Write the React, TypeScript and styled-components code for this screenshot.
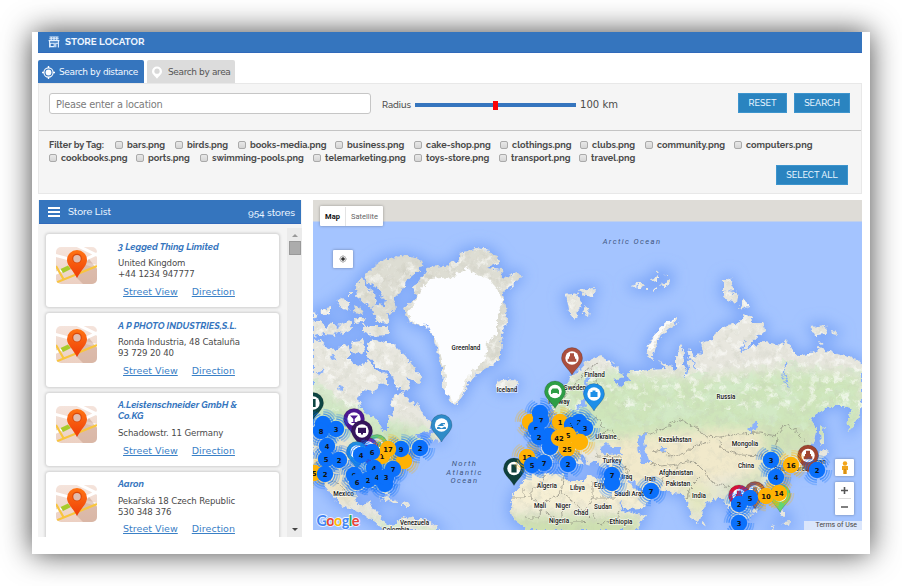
import React from "react";
import styled, { createGlobalStyle, css } from "styled-components";

const VERDANA = `"DejaVu Sans", Verdana, sans-serif`;
const RALEWAY = `Raleway, Lato, sans-serif`;
const BLUE = "#3575be";

const Global = createGlobalStyle`
  * { box-sizing: border-box; }
  html, body { margin: 0; background: #fff; }
  body { width: 902px; height: 586px; overflow: hidden; font-family: ${VERDANA}; color: #4b4b4b; }
`;

const Page = styled.div`
  width: 902px;
  height: 586px;
  padding: 32px;
  overflow: hidden;
`;
const Frame = styled.main`
  width: 838px;
  height: 522px;
  padding: 0 8px 0 6px;
  background: #fff;
  box-shadow: 0 0 28px rgba(0, 0, 0, 0.72);
`;
const TitleBar = styled.header`
  height: 21px;
  display: flex;
  align-items: center;
  gap: 5px;
  padding-left: 10px;
  background: ${BLUE};
  border-bottom: 1px solid #3069ba;
  color: #fff;
`;
const Title = styled.h1`
  margin: 0;
  font: 700 9.8px/20px ${RALEWAY};
  letter-spacing: 0;
  color: #eef6ff;
`;
const Tabs = styled.nav`
  display: flex;
  gap: 3px;
  padding-top: 7px;
`;
const Tab = styled.div<{ $active?: boolean; $width: number }>`
  width: ${(p) => p.$width}px;
  height: 23px;
  display: flex;
  align-items: center;
  gap: ${(p) => (p.$active ? 4 : 5)}px;
  padding: 1px 0 0 4px;
  border-radius: 2px 2px 0 0;
  background: ${(p) => (p.$active ? BLUE : "#dcdcdc")};
  color: ${(p) => (p.$active ? "#f2f8ff" : "#555")};
  font: 9px/22px ${VERDANA};
  letter-spacing: -0.38px;
  white-space: nowrap;
`;
const Panel = styled.section`
  height: 111px;
  border: 1px solid #e8e8e8;
  background: #f5f5f5;
`;
const SearchRow = styled.div`
  height: 47px;
  display: flex;
  padding: 9px 11px 0 10px;
  border-bottom: 1px solid #c4c4c4;
`;
const LocationInput = styled.input`
  width: 322px;
  height: 21px;
  padding: 1px 6px 0;
  border: 1px solid #c6c6c6;
  border-radius: 3px;
  background: #fff;
  font: 9.8px ${VERDANA};
  letter-spacing: -0.25px;
  outline: 0;
  &::placeholder { color: #7b7b7b; opacity: 1; }
`;
const RadiusLabel = styled.label`
  width: 33px;
  margin-left: 11px;
  font: 500 9.2px/24px ${RALEWAY};
`;
const Track = styled.div`
  width: 161px;
  height: 4px;
  margin: 10px 4px 0 0;
  display: flex;
  align-items: center;
  justify-content: center;
  background: ${BLUE};
`;
const Thumb = styled.span`
  width: 5px;
  height: 9px;
  background: #fb0207;
`;
const Distance = styled.span`
  flex: 1;
  font: 10px/23px ${VERDANA};
  letter-spacing: 0.05px;
`;
const Button = styled.button<{ $width: number }>`
  width: ${(p) => p.$width}px;
  height: 20px;
  padding: 0;
  margin-left: 7px;
  border: 1px solid #3d94cd;
  border-radius: 0;
  background: #2a84c0;
  color: #e9f5ff;
  font: 500 9px/18px ${RALEWAY};
  letter-spacing: 0;
`;
const Tags = styled.div`
  display: flex;
  flex-wrap: wrap;
  padding: 7px 0 0 10px;
  font: 700 9.1px/13.2px ${RALEWAY};
`;
const TagsLabel = styled.strong<{ $width: number }>`
  width: ${(p) => p.$width}px;
  font-weight: 700;
`;
const Tag = styled.label<{ $width: number }>`
  width: ${(p) => p.$width}px;
  height: 13px;
  display: flex;
  align-items: center;
  gap: 4px;
  white-space: nowrap;
`;
const Box = styled.span`
  width: 8px;
  height: 8px;
  border: 1px solid #aaa;
  border-radius: 2px;
  background: linear-gradient(#e8e8e8, #d5d5d5);
`;
const SelectRow = styled.div`
  display: flex;
  justify-content: flex-end;
  padding: 1px 13px 0 0;
`;
const Body = styled.div`
  display: flex;
  padding-top: 6px;
`;
const Side = styled.aside`
  width: 264px;
  height: 337px;
  overflow: hidden;
  background: #f4f4f4;
`;
const ListHead = styled.div`
  height: 24px;
  margin: 0 1px;
  display: flex;
  align-items: center;
  padding: 0 6px 0 9px;
  background: ${BLUE};
  border-bottom: 1px solid #3069ba;
  color: #eaf4ff;
  font: 500 9.8px/23px ${RALEWAY};
`;
const ListTitle = styled.span`
  flex: 1;
  padding-left: 8px;
`;
const Count = styled.span`
  padding-top: 2px;
`;
const ListBody = styled.div`
  display: flex;
  height: 313px;
`;
const Cards = styled.div`
  width: 249px;
  padding: 10px 7px 0 8px;
  display: flex;
  flex-direction: column;
  gap: 6px;
`;
const Card = styled.article`
  flex: none;
  width: 233px;
  height: 73.3px;
  display: flex;
  border-radius: 3px;
  background: #fff;
  box-shadow: 0 0 3px 1px rgba(0, 0, 0, 0.16);
`;
const Thumbnail = styled.div`
  width: 72px;
  padding: 13px 0 0 10px;
`;
const Info = styled.div`
  font: 8.6px/10.8px ${VERDANA};
  letter-spacing: -0.12px;
  color: #4a4a4a;
`;
const Name = styled.h2`
  width: 130px;
  margin: 6.5px 0 6.2px;
  font: italic 700 9.3px/11.3px ${RALEWAY};
  letter-spacing: 0;
  color: ${BLUE};
`;
const Links = styled.div`
  display: flex;
  gap: 14px;
  padding: 6px 0 0 5px;
`;
const Link = styled.a`
  color: #3a80c6;
  font: 9.5px/12px ${VERDANA};
  letter-spacing: 0.03px;
  text-decoration: underline;
`;
const Scroll = styled.div`
  width: 15px;
  margin-top: 4px;
  display: flex;
  flex-direction: column;
  align-items: center;
  justify-content: space-between;
  background: #ebebeb;
  padding: 6px 0;
`;
const ScrollTop = styled.div`
  display: flex;
  flex-direction: column;
  align-items: center;
  gap: 4px;
`;
const Arrow = styled.i<{ $down?: boolean }>`
  border: 3.5px solid transparent;
  ${(p) =>
    p.$down
      ? css`border-top-color: #444; border-bottom: 0;`
      : css`border-bottom-color: #999; border-top: 0;`}
`;
const Handle = styled.span`
  width: 12px;
  height: 14px;
  border: 1px solid #999;
  background: #acacac;
`;
const MapPane = styled.section`
  position: relative;
  width: 549px;
  height: 330px;
  margin-left: 11px;
  overflow: hidden;
  & > svg { display: block; }
`;
const MapControl = styled.div<{ $x: number; $y: number; $w: number; $h: number; $column?: boolean }>`
  position: absolute;
  left: ${(p) => p.$x}px;
  top: ${(p) => p.$y}px;
  width: ${(p) => p.$w}px;
  height: ${(p) => p.$h}px;
  display: flex;
  flex-direction: ${(p) => (p.$column ? "column" : "row")};
  align-items: center;
  justify-content: center;
  background: #fff;
  border-radius: 1px;
  box-shadow: 0 0 3px rgba(0, 0, 0, 0.35);
`;
const MapType = styled.span<{ $on?: boolean }>`
  flex: ${(p) => (p.$on ? "0 0 25px" : "1")};
  text-align: center;
  font: ${(p) => (p.$on ? 700 : 400)} 7.5px/19px Roboto, sans-serif;
  color: ${(p) => (p.$on ? "#111" : "#666")};
  border-left: ${(p) => (p.$on ? 0 : 1)}px solid #e4e4e4;
`;
const Terms = styled.div`
  position: absolute;
  right: 0;
  bottom: 0;
  width: 58px;
  height: 9px;
  padding-right: 5px;
  background: rgba(240, 243, 250, 0.72);
  text-align: right;
  font: 7px/9px Roboto, sans-serif;
  color: #444;
`;

const ShopIcon = () => (
  <svg width="12" height="12" viewBox="0 0 12 12" fill="none" stroke="#e4f1ff" strokeWidth="1.1">
    <path d="M1.5 1h9M1.3 2.8h9.4M.6 4.6h10.8M1.6 5v6.4M10.4 5v6.4M2.2 7.2h4v3.4h-4zM7.8 11.3V7.2h2.4M3.2 1v4M6 1v4M8.8 1v4" />
  </svg>
);
const TargetIcon = () => (
  <svg width="13" height="13" viewBox="0 0 13 13" fill="none" stroke="#fff">
    <circle cx="6.5" cy="6.5" r="4.6" strokeWidth="1.1" />
    <circle cx="6.5" cy="6.5" r="2.9" fill="#fff" stroke="none" />
    <path d="M6.5 0v2M6.5 11v2M0 6.5h2M11 6.5h2" strokeWidth="1.4" />
  </svg>
);
const AreaIcon = () => (
  <svg width="12" height="13" viewBox="0 0 12 13">
    <path d="M6 .5a5 5 0 0 1 5 5C11 8.200 8 10 6 12.800 4 10 1 8.200 1 5.500a5 5 0 0 1 5-5z" fill="#fff" />
    <circle cx="6" cy="5.200" r="2.600" fill="#d8d8d8" />
  </svg>
);
const MenuIcon = () => (
  <svg width="12" height="10" viewBox="0 0 12 10" fill="#fff">
    <path d="M0 0h12v2H0zM0 4h12v2H0zM0 8h12v2H0z" />
  </svg>
);

const PinThumb = () => (
  <svg width="41" height="37" viewBox="0 0 41 37">
    <defs>
      <clipPath id="tile"><rect width="41" height="37" rx="5" /></clipPath>
      <linearGradient id="tileBg" x1="0" y1="0" x2="0" y2="1">
        <stop offset="0" stopColor="#f5e4dc" /><stop offset="1" stopColor="#ecd0c2" />
      </linearGradient>
      <linearGradient id="pinFill" x1="0" y1="0" x2="0" y2="1">
        <stop offset="0" stopColor="#ff7414" /><stop offset="1" stopColor="#ee3d08" />
      </linearGradient>
    </defs>
    <g clipPath="url(#tile)">
      <rect width="41" height="37" fill="url(#tileBg)" />
      <path d="M-2 8 43 20M-2 27 43 6M20-2 43 9" stroke="#fff" strokeWidth="3" />
      <path d="M20 30 33 12 41 22V37H27z" fill="#c79d89" opacity=".5" />
      <path d="M-1 36 41 19M0 19l8 14" stroke="#f8c53f" strokeWidth="2.200" fill="none" />
      <path d="M4.500 22 12 18.500 15 22 7 26z" fill="#a8cb2b" />
    </g>
    <path d="M21 3a10 10 0 0 1 10 10c0 6-6 10-10 18C17 23 11 19 11 13A10 10 0 0 1 21 3z" fill="url(#pinFill)" />
    <circle cx="21" cy="11.500" r="4.800" fill="#d9490c" />
    <circle cx="21" cy="11.800" r="3.700" fill="#e2bdae" />
  </svg>
);

const STORES = [
  { name: "3 Legged Thing Limited", lines: ["United Kingdom", "+44 1234 947777"] },
  { name: "A P PHOTO INDUSTRIES,S.L.", lines: ["Ronda Industria, 48 Cataluña", "93 729 20 40"] },
  { name: "A.Leistenschneider GmbH & Co.KG", lines: ["Schadowstr. 11 Germany"] },
  { name: "Aaron", lines: ["Pekařská 18 Czech Republic", "530 348 376"] },
];

const TAG_ROWS: [string, number][][] = [
  [["bars", 60], ["birds", 63], ["books-media", 97], ["business", 79], ["cake-shop", 86], ["clothings", 80], ["clubs", 65], ["community", 89], ["computers", 110]],
  [["cookbooks", 87], ["ports", 64], ["swimming-pools", 113], ["telemarketing", 101], ["toys-store", 85], ["transport", 80], ["travel", 120]],
];

/* Continents, in the map's own coordinate space. */
const LAND = [
  "M365 275 372 268 383 260 400 256 415 258 424 263 417 272 407 280 403 290 393 300 397 307 390 315 383 313 385 300 377 287 367 283z",
  "M355 287 362 277 367 287 375 293 377 305 372 308 358 298z",
  "M372 309 380 303 388 317 390 323 377 322z",
  "M337 300 343 298 350 305 349 311 341 308zM353 305 361 309 363 315 355 313zM322 309 331 307 331 314 324 315zM349 292l3 0 0 3-3 0zM313 322 318 320 326 327 333 321 337 329 335 335 325 334 313 336zM338 325 350 321 353 329 342 334 336 332zM363 324 372 327 388 327 388 335 372 336 363 332zM313 312l4 1-2 5-2 0zM354 318 366 318 364 322 355 323z",
  "M368 343 377 340 386 343 393 343 403 353 415 368 423 378 418 383 407 377 411 388 404 392 397 387 390 373 377 367 368 357z",
  "M353 341 362 340 365 350 358 354 350 352z",
  "M313 339 320 340 325 346 335 350 345 343 350 350 350 362 362 366 368 360 377 371 387 375 389 385 378 383 374 392 362 390 358 400 361 409 369 416 378 420 382 431 388 430 388 418 394 412 391 402 393 395 402 393 410 401 415 406 418 403 423 416 433 424 430 430 422 432 413 436 424 438 416 445 410 449 403 459 400 469 395 476 388 483 391 493 388 496 383 490 367 487 357 491 355 499 358 505 367 504 372 500 371 508 378 511 380 519 387 524 394 526 403 516 413 519 427 519 433 524 441 530 385 530 375 523 363 514 350 509 340 504 333 496 325 486 318 479 313 475z",
  "M428 439 435 430 443 436 440 441z",
  "M378 498 386 496 399 502 392 502zM401 503 408 502 410 505 402 505z",
  "M425 273 428 267 443 266 457 262 460 253 477 248 490 250 500 262 487 268 502 270 503 277 517 272 521 276 512 285 503 293 505 307 507 320 503 333 500 350 500 360 483 370 473 377 467 387 462 397 455 405 448 399 443 387 442 370 438 353 433 337 428 328 410 323 403 308 413 302 417 297 413 288z",
  "M496 382 503 380 514 379 518 384 511 391 500 390z",
  "M565 295 577 293 582 302 575 320 568 310zM578 290 595 288 593 297 583 295zM583 305 590 311 589 316 584 313z",
  "M632 286 637 284 636 289zM638 283l6 0-1 5-4 1zM651 279l7-2 0 4-6 1zM655 272l4-1-1 3-3 0zM664 275l4-1-1 2zM660 285l5-2 5-4 0 4-7 5zM653 289l4-3 0 3-3 2zM647 288l2 0 0 2-2 0z",
  "M677 318 667 322 657 331 650 342 645 354 653 359 655 350 659 338 669 328 678 322z",
  "M724 281 730 278 734 290 724 291zM722 293 728 290 738 295 737 303 729 301zM738 309 743 298 749 306zM811 327 825 325 826 334 815 335zM830 331l8 1-1 3-6-1zM818 341l5 2-4 1z",
  "M549 400 554 392 563 388 570 379 580 369 587 361 600 356 612 363 620 371 623 377 612 380 620 387 630 380 628 371 637 371 650 370 665 369 659 361 671 366 676 372 676 357 680 345 684 350 683 365 687 371 690 360 688 348 696 358 702 352 700 343 713 340 715 333 727 325 740 323 743 314 750 317 752 322 763 322 765 330 757 337 748 347 763 342 783 345 787 340 797 357 813 352 820 348 833 353 853 358 862 364V399L861 409 858 419 849 431 847 420 852 408 843 406 830 406 822 411 809 419 817 429 815 441 807 449 800 453 798 458 803 466 797 469 790 461 785 458 783 466 784 476 780 487 768 498 757 503 750 506 754 514 748 521 743 518 740 523 744 530 738 530 733 518 730 509 723 498 717 498 705 505 698 522 693 519 687 501 683 494 673 493 660 489 651 485 654 494 648 503 640 508 625 509 617 497 611 486 609 477 609 466 602 468 595 461 589 465 583 456 576 449 584 466 578 464 568 450 556 455 549 467 538 470 529 468 530 456 542 455 540 443 549 436 559 428 556 416 552 408z",
  "M533 436 537 427 534 419 541 415 547 431 543 437z",
  "M528 474 552 473 563 473 567 481 583 481 590 476 603 479 612 479 618 496 622 510 645 516 637 530 528 530 513 519 510 509 513 496 522 484z",
  "M820 424 824 430 824 443 821 446zM822 449 828 452 824 458 818 462 811 469 810 466 817 458zM702 520l4 3-1 4-3-2zM753 508l5 0-1 4-4-1zM780 510 785 511 785 518 780 515zM783 521 790 520 789 527 785 525zM771 527l4-1-4 4z",
].join("");

const LAKES =
  "M586 376 590 374 588 387 594 389 603 387 596 392 589 397 584 408 577 409 583 398 584 387z M600 447 607 443 612 447 620 447 624 454 604 455z M637 436 648 432 644 441 645 449 650 463 643 463 639 452z M627 481 633 481 641 488 647 488 646 491 637 491z M748 428 758 420 758 427 750 434z M661 448l4 0-1 4-4-1z M362 437l8-2 8 4-6 2-4 5-3-6z M330 357l5-2 1 4-4 1zM318 372l6-3 1 3-6 3zM338 385l4 2-2 4zM345 412l3 6-2 2z";

const BORDERS =
  "M641 433 652 433 664 428 676 420 690 424 706 436 720 437 738 434 760 433 776 436 786 425 795 429 805 441M652 452 662 450 672 457 684 454 692 447 710 441M720 441 722 449 740 455 764 456 776 450 778 438M651 463 660 466 678 464 694 461 703 470 712 483 730 487 742 493M660 489 662 478 672 474 678 466M687 499 690 488 700 478M604 468 624 466 632 473M624 466 636 490M564 475 561 492 585 511 592 498 592 480M592 498 616 498M561 492 541 506 531 498 531 490 541 484 545 475M541 506 540 518 525 518M561 506 563 522 584 522 592 514M545 512 558 520M592 514 600 524 616 520 620 511M513 497 524 497 524 489M600 434 612 430 620 440M587 420 598 418 604 428M590 402 598 396 596 380M564 398 572 388 585 372 597 363M318 479 333 480 345 490M340 425 365 424 M403 517 400 530M556 440 566 436 576 440M596 456 620 457";

const LABELS: [string, number, number][] = [
  ["Greenland", 466, 349.5], ["Iceland", 507, 392], ["Finland", 594.5, 376.5], ["Sweden", 575, 389.5], ["Norway", 559, 403.5],
  ["Russia", 726, 399], ["Ukraine", 606, 438.5], ["Kazakhstan", 675, 442], ["Mongolia", 745, 445.5], ["China", 746, 468],
  ["Turkey", 612, 463], ["Iraq", 627, 479], ["Iran", 650, 480.5], ["Afghanistan", 676, 474.5], ["Pakistan", 678, 486],
  ["India", 699, 497.5], ["Saudi Arabia", 632, 496], ["Egypt", 602, 487], ["Algeria", 547, 488], ["Libya", 577.5, 490],
  ["Mali", 540, 507.5], ["Niger", 563, 507.5], ["Chad", 581, 514.5], ["Sudan", 603, 509], ["Nigeria", 559, 522.5],
  ["Ethiopia", 621, 523.5], ["Mexico", 343.5, 496], ["Venezuela", 414.5, 525], ["Colombia", 396, 531.5], ["Japan", 817, 464], ["South Korea", 791, 470.5],
];

const B = "#0a70fb";
const Y = "#ffb204";
const CLUSTERS: [number, number, string, string][] = [
  [323, 424, B, ""], [321, 431, B, "8"], [336, 429, B, "3"], [327, 446, B, "4"], [314, 473, Y, "5"], [326, 459, B, "5"], [339, 460, B, "2"], [325, 474, B, "2"],
  [404, 461, Y, ""], [382, 456, Y, "1"], [372, 452, B, "6"], [361, 455, B, "4"], [401, 449, B, "9"], [388, 449, Y, "17"], [420, 448, B, "2"],
  [393, 469, B, "7"], [374, 468, B, "4"], [354, 475, B, "9"], [368, 480, B, "2"], [357, 482, B, "6"], [385, 484, B, ""], [377, 477, B, "4"], [386, 477, B, "3"],
  [530, 422, Y, ""], [540, 413, B, ""], [541, 420, B, "7"], [536, 429, B, "5"], [549, 436, B, ""], [539, 437, B, "2"], [550, 447, B, ""],
  [560, 422, Y, "1"], [572, 425, B, "3"], [579, 422, B, "2"], [585, 428, B, "3"], [580, 442, Y, ""], [567, 449, Y, "25"], [568, 435, Y, "5"], [559, 438, Y, "42"],
  [527, 457, Y, "12"], [532, 465, B, "5"], [544, 463, B, "7"], [568, 464, B, "2"], [612, 483, B, ""], [612, 475, B, "7"], [651, 491, B, "7"],
  [771, 460, B, "3"], [776, 477, B, "4"], [791, 465, Y, "16"], [817, 470, B, "2"], [750, 498, B, "5"], [739, 504, B, "2"], [766, 496, Y, "10"], [779, 493, Y, "14"], [739, 523, B, "3"],
];

const Rings = ({ x, y, color }: { x: number; y: number; color: string }) => (
  <g fill="none" stroke={color} strokeWidth="1.5">
    <circle cx={x} cy={y} r="10" opacity=".6" strokeDasharray="12.700 3" />
    <circle cx={x} cy={y} r="12.300" opacity=".42" strokeDasharray="14 5.300" />
    <circle cx={x} cy={y} r="14.600" opacity=".25" strokeDasharray="15 7.900" />
  </g>
);
const Cluster = ({ x, y, color, text }: { x: number; y: number; color: string; text: string }) => (
  <g>
    <circle cx={x} cy={y} r="8.200" fill={color} />
    {text && (
      <text x={x} y={y + 2.500} textAnchor="middle" fontFamily="DejaVu Sans" fontWeight="700" fontSize="6.800" fill="#111">{text}</text>
    )}
  </g>
);

const GLYPHS: Record<string, string> = {
  buddha: "M-2-4.800h4v3.300H3v2.200h1.300v3H-4.300v-3H-3v-2.200h1z",
  car: "M-4-1 -2.500-3h5L4-1v3.500h-1.500V1.500h-5v1H-4z",
  bag: "M-3.500-2h2v-1.500h3V-2h2v5h-7z",
  swim: "M-4.500 2.500q1.500-1.500 3 0t3 0 3 0V4h-9zM-4 1l4-3h3.500v1.300H1L2.500 1z",
  glass: "M-4-3.500h8L.7 0v3H2.500v1h-5V3h1.800V0z",
  screen: "M-4-3.200h8v5.200h-3v1.500h-2V2h-3z",
  phone: "M-2.600-4h5.200v8h-5.200z",
};
const PINS: [number, number, string, string][] = [
  [313, 403, "#0d4542", "phone"], [377, 445, "#63c878", "screen"], [354, 419, "#4c1791", "glass"], [368, 448, "#6a2ba5", "car"], [362, 431, "#35155c", "screen"],
  [357, 452, "#2593dc", "bag"], [441.5, 425, "#2e8bc8", "swim"], [572, 358, "#ab4f3e", "buddha"], [555, 391.5, "#2e9e46", "car"], [594, 394, "#1c8fe8", "bag"],
  [514, 468.5, "#0f403c", "phone"], [808, 455.5, "#a0442f", "buddha"], [755, 492, "#9d5548", "buddha"], [739, 495.5, "#d61339", "buddha"], [780, 495, "#63d572", "car"],
];
const Pin = ({ x, y, color, glyph }: { x: number; y: number; color: string; glyph: string }) => (
  <g transform={`translate(${x} ${y})`}>
    <path d="M0-10.500A10.500 10.500 0 0 1 10.500 0C10.500 6 4 10 0 17-4 10-10.500 6-10.500 0A10.500 10.500 0 0 1 0-10.500z" fill={color} stroke="#000" strokeOpacity=".25" strokeWidth=".7" />
    <circle r="6.700" fill="#fff" />
    <path d={GLYPHS[glyph]} fill={color} />
  </g>
);

const WorldMap = () => (
  <svg width="549" height="330" viewBox="313 200 549 330">
    <defs>
      <path id="land" d={LAND} />
      <clipPath id="landClip"><path d={LAND} /></clipPath>
      <filter id="coast" x="0" y="0" width="1" height="1">
        <feTurbulence type="fractalNoise" baseFrequency=".2" numOctaves="3" seed="8" result="n" />
        <feDisplacementMap in="SourceGraphic" in2="n" scale="7" xChannelSelector="R" yChannelSelector="G" />
      </filter>
      <filter id="relief" x="0" y="0" width="1" height="1">
        <feTurbulence type="fractalNoise" baseFrequency=".12" numOctaves="4" seed="21" />
        <feColorMatrix values="0 0 0 0 .55  0 0 0 0 .57  0 0 0 0 .48  2.400 0 0 0 -1.150" />
      </filter>
      <filter id="snow" x="0" y="0" width="1" height="1">
        <feTurbulence type="fractalNoise" baseFrequency=".12" numOctaves="3" seed="4" />
        <feColorMatrix values="0 0 0 0 1  0 0 0 0 1  0 0 0 0 .98  0 4 0 0 -2.100" />
      </filter>
      <filter id="wood" x="0" y="0" width="1" height="1">
        <feTurbulence type="fractalNoise" baseFrequency=".05" numOctaves="4" seed="13" />
        <feColorMatrix values="0 0 0 0 .66  0 0 0 0 .84  0 0 0 0 .6  0 5 0 0 -2.300" />
      </filter>
      <filter id="soft" x="-.3" y="-.3" width="1.600" height="1.600"><feGaussianBlur stdDeviation="7" /></filter>
      <filter id="blend" x="-.3" y="-.3" width="1.600" height="1.600"><feGaussianBlur stdDeviation="6" /></filter>
      <clipPath id="woodClip"><path d="M540 375 600 365 660 380 700 372 740 370 790 358 862 370V440L780 425 700 428 650 425 590 430zM313 375 340 400 400 415 430 430 400 465 380 480 313 430zM340 500 400 520 440 530H370z" /></clipPath>
    </defs>
    <rect x="313" y="200" width="549" height="330" fill="#a4c4ff" />
    <g filter="url(#soft)"><use href="#land" fill="#6d9bf5" stroke="#6d9bf5" strokeWidth="7" opacity=".7" /></g>
    <rect x="313" y="200" width="549" height="21.500" fill="#dedcd7" />
    <g filter="url(#coast)">
      <rect x="313" y="200" width="549" height="330" fill="none" />
      <use href="#land" fill="#e8e7df" />
      <g clipPath="url(#landClip)">
        <g filter="url(#blend)">
          <path d="M530 385 610 375 700 378 790 370 862 375V440H800L700 430 560 445z" fill="#cee5ba" />
          <path d="M313 385 340 405 370 418 440 435 400 450 313 425z" fill="#c7e2b6" />
          <path d="M313 440 345 440 360 490 345 505 313 480z" fill="#ece3c4" />
          <path d="M390 440 405 440 395 490 360 480z" fill="#c9e2b4" />
          <path d="M500 470 620 475 670 520 640 510 500 510z" fill="#f6efd4" />
          <path d="M500 516 640 516V540H500z" fill="#cde0b0" />
          <path d="M600 440 700 430 780 430 770 470 720 480 640 500 600 470z" fill="#f1e9cb" />
          <path d="M760 425 820 425 810 455 785 455 740 505 720 490 765 470z" fill="#d0e2b7" />
          <path d="M680 480 720 490 700 520 685 505z" fill="#e3e7c0" />
        </g>
        <g clipPath="url(#woodClip)"><rect x="313" y="360" width="549" height="170" filter="url(#wood)" opacity=".7" /></g>
        <rect x="313" y="240" width="549" height="290" filter="url(#relief)" opacity=".38" />
        <path d="M350 250H530V300L500 370H410L430 330 400 320H350z" fill="#a8a795" opacity=".16" />
        <rect x="313" y="240" width="549" height="170" filter="url(#snow)" opacity=".6" />
        <path d="M430 279 453 277 467 268 480 276 490 280 498 290 503 300 497 317 497 333 487 343 485 360 467 377 463 390 455 402 446 393 446 375 441 355 436 340 428 328 410 321 408 312 417 300 420 290z" fill="#fcfdff" />
        <path d="M674 318 659 331 649 350" stroke="#fff" strokeWidth="4" fill="none" opacity=".8" />
        <path d={BORDERS} fill="none" stroke="#7c7b70" strokeWidth=".8" opacity=".75" />
      </g>
      <path d={LAKES} fill="#8db3fb" />
      <path d="M686 350 688 362 685 378M786 362 784 375 789 388M692 360 697 370M752 345 742 351 745 340M430 330 424 322" fill="none" stroke="#86aefb" strokeWidth="1.300" />
    </g>
    <g fontFamily="Roboto, sans-serif" fontSize="6.300" fontWeight="500" textAnchor="middle" fill="#161616" stroke="#fff" strokeWidth="1.600" strokeOpacity=".65" paintOrder="stroke">
      {LABELS.map(([t, x, y]) => <text key={t} x={x} y={y}>{t}</text>)}
    </g>
    <g fontFamily="Roboto, sans-serif" fontStyle="italic" fontSize="7.600" fill="#41577f" textAnchor="middle" letterSpacing="1.400">
      <text x="632" y="243.500">Arctic Ocean</text>
      <text x="464.500" y="466">North</text>
      <text x="464.500" y="474.500">Atlantic</text>
      <text x="464.500" y="482.500">Ocean</text>
    </g>
    {PINS.map(([x, y, color, glyph], i) => <Pin key={i} x={x} y={y} color={color} glyph={glyph} />)}
    {CLUSTERS.map(([x, y, color], i) => <Rings key={i} x={x} y={y} color={color} />)}
    {CLUSTERS.map(([x, y, color, text], i) => <Cluster key={i} x={x} y={y} color={color} text={text} />)}
    <text x="316.500" y="526" fontFamily="Lato, sans-serif" fontSize="14.500" fontWeight="700" textLength="43" stroke="#fff" strokeWidth="1.800" paintOrder="stroke" strokeOpacity=".8">
      <tspan fill="#4285f4">G</tspan><tspan fill="#ea4335">o</tspan><tspan fill="#fbbc05">o</tspan><tspan fill="#4285f4">g</tspan><tspan fill="#34a853">l</tspan><tspan fill="#ea4335">e</tspan>
    </text>
  </svg>
);

export default function App() {
  return (
    <Page>
      <Global />
      <Frame>
        <TitleBar><ShopIcon /><Title>STORE LOCATOR</Title></TitleBar>
        <Tabs>
          <Tab $active $width={106}><TargetIcon />Search by distance</Tab>
          <Tab $width={88}><AreaIcon />Search by area</Tab>
        </Tabs>
        <Panel>
          <SearchRow>
            <LocationInput placeholder="Please enter a location" />
            <RadiusLabel>Radius</RadiusLabel>
            <Track><Thumb /></Track>
            <Distance>100 km</Distance>
            <Button $width={49}>RESET</Button>
            <Button $width={56}>SEARCH</Button>
          </SearchRow>
          <Tags>
            <TagsLabel $width={66}>Filter by Tag:</TagsLabel>
            {TAG_ROWS.flat().map(([name, width]) => (
              <Tag key={name} $width={width}><Box />{name}.png</Tag>
            ))}
          </Tags>
          <SelectRow><Button $width={72}>SELECT ALL</Button></SelectRow>
        </Panel>
        <Body>
          <Side>
            <ListHead><MenuIcon /><ListTitle>Store List</ListTitle><Count>954 stores</Count></ListHead>
            <ListBody>
              <Cards>
                {STORES.map((s) => (
                  <Card key={s.name}>
                    <Thumbnail><PinThumb /></Thumbnail>
                    <Info>
                      <Name>{s.name}</Name>
                      {s.lines.map((l) => <div key={l}>{l}</div>)}
                      <Links><Link>Street View</Link><Link>Direction</Link></Links>
                    </Info>
                  </Card>
                ))}
              </Cards>
              <Scroll>
                <ScrollTop><Arrow /><Handle /></ScrollTop>
                <Arrow $down />
              </Scroll>
            </ListBody>
          </Side>
          <MapPane>
            <WorldMap />
            <MapControl $x={7} $y={6} $w={63} $h={20}><MapType $on>Map</MapType><MapType>Satellite</MapType></MapControl>
            <MapControl $x={20} $y={50} $w={20} $h={18}>
              <svg width="10" height="10" viewBox="0 0 10 10"><circle cx="5" cy="5" r="3" fill="none" stroke="#bbb" /><path d="M5 1v8M1 5h8" stroke="#bbb" /><circle cx="5" cy="5" r="1.800" fill="#333" /></svg>
            </MapControl>
            <MapControl $x={522} $y={259} $w={19} $h={17}>
              <svg width="8" height="13" viewBox="0 0 8 13"><circle cx="4" cy="2.500" r="2.200" fill="#f2a51b" /><path d="M1 5h6v4H5.800v4H2.200V9H1z" fill="#f0a41c" /><path d="M4 8v5" stroke="#a66d10" strokeWidth=".7" /></svg>
            </MapControl>
            <MapControl $x={522} $y={282} $w={19} $h={33} $column>
              <svg width="19" height="33" viewBox="0 0 19 33" stroke="#555" strokeWidth="1.600"><path d="M6 8.500h7M9.500 5v7M6 25h7" /><path d="M3 16.500h13" stroke="#ddd" strokeWidth="1" /></svg>
            </MapControl>
            <Terms>Terms of Use</Terms>
          </MapPane>
        </Body>
      </Frame>
    </Page>
  );
}
